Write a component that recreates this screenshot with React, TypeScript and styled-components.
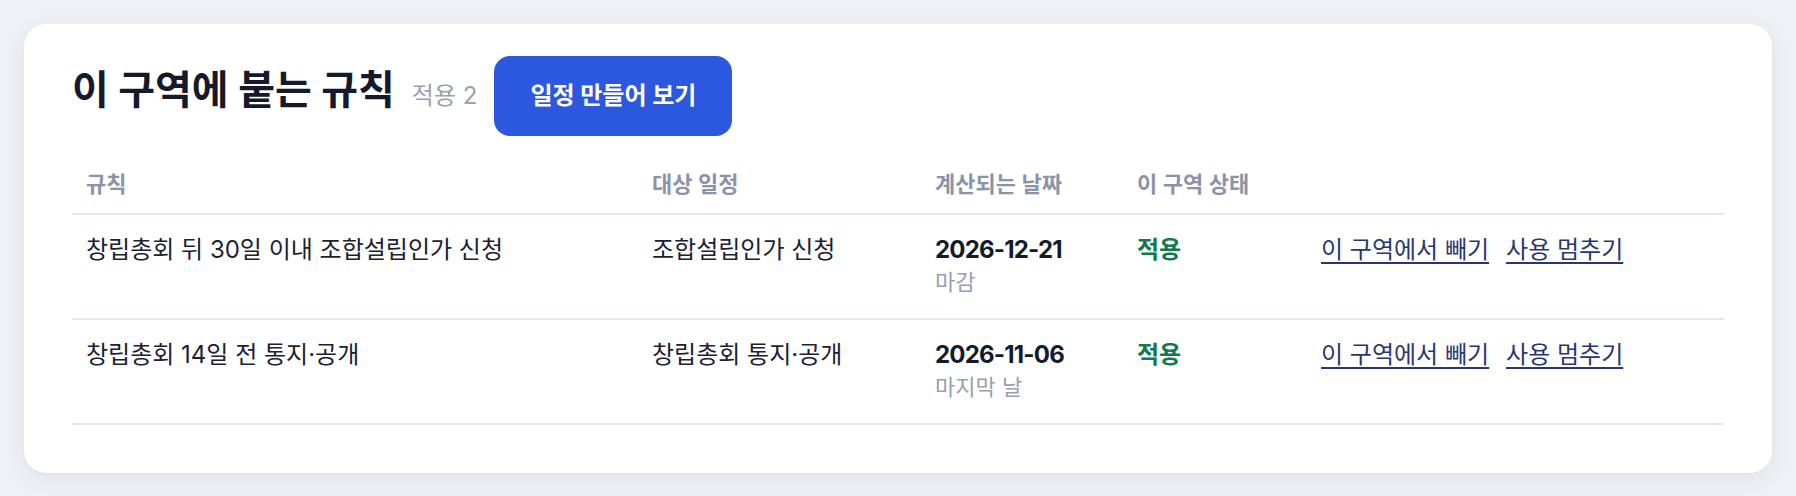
import React from "react";
import styled, { createGlobalStyle } from "styled-components";

const GlobalStyle = createGlobalStyle`
  * { box-sizing: border-box; }
  html, body { margin: 0; padding: 0; }
  body {
    background: #eef0f5;
    font-family: Inter, "Noto Sans CJK KR", "Noto Sans", sans-serif;
    color: #172033;
  }
`;

const Page = styled.div`
  padding: 24px;
`;

const Card = styled.section`
  background: #ffffff;
  border-radius: 22px;
  box-shadow: 0 6px 22px rgba(28, 38, 72, 0.06), 0 1px 3px rgba(28, 38, 72, 0.04);
  padding: 32px 48px 48px;
`;

const Header = styled.div`
  display: flex;
  align-items: baseline;
  gap: 17px;
`;

const Title = styled.h2`
  margin: 0;
  font-size: 40px;
  line-height: 48px;
  font-weight: 700;
  color: #141a2b;
`;

const Count = styled.span`
  font-size: 24px;
  line-height: 32px;
  color: #979fb1;
  font-weight: 400;
`;

const PrimaryButton = styled.button`
  font-family: inherit;
  font-size: 24px;
  line-height: 32px;
  font-weight: 700;
  color: #ffffff;
  background: #2c58e0;
  border: none;
  border-radius: 16px;
  padding: 24px 36px;
  cursor: pointer;
`;

const Table = styled.div`
  margin-top: 21px;
  display: grid;
  grid-template-columns: 566px 283px 202px 184px 1fr;
`;

const HeadCell = styled.div`
  padding: 12px 14px 13px;
  font-size: 22px;
  line-height: 31px;
  font-weight: 600;
  color: #8a93a7;
  border-bottom: 2px solid #e3e7f0;
`;

const Cell = styled.div`
  padding: 18px 14px 20px;
  font-size: 24px;
  line-height: 34px;
  color: #1a2233;
  border-bottom: 2px solid #e3e7f0;
  display: flex;
  flex-direction: column;
  align-items: flex-start;
`;

const DateMain = styled.span`
  font-weight: 700;
  color: #131a2c;
  letter-spacing: -0.8px;
`;

const DateSub = styled.span`
  font-size: 22px;
  line-height: 31px;
  color: #979fb0;
`;

const Status = styled.span`
  font-weight: 700;
  color: #0d7a4f;
`;

const Actions = styled.div`
  display: flex;
  gap: 17px;
`;

const LinkButton = styled.a`
  font-size: 24px;
  line-height: 34px;
  color: #28386f;
  text-decoration: underline;
  text-decoration-thickness: 2px;
  text-underline-offset: 4px;
  cursor: pointer;
`;

type Rule = {
  name: string;
  target: string;
  date: string;
  dateLabel: string;
  status: string;
};

const rules: Rule[] = [
  {
    name: "창립총회 뒤 30일 이내 조합설립인가 신청",
    target: "조합설립인가 신청",
    date: "2026-12-21",
    dateLabel: "마감",
    status: "적용",
  },
  {
    name: "창립총회 14일 전 통지·공개",
    target: "창립총회 통지·공개",
    date: "2026-11-06",
    dateLabel: "마지막 날",
    status: "적용",
  },
];

export default function App() {
  return (
    <>
      <GlobalStyle />
      <Page>
        <Card>
          <Header>
            <Title>이 구역에 붙는 규칙</Title>
            <Count>적용 2</Count>
            <PrimaryButton>일정 만들어 보기</PrimaryButton>
          </Header>
          <Table>
            <HeadCell>규칙</HeadCell>
            <HeadCell>대상 일정</HeadCell>
            <HeadCell>계산되는 날짜</HeadCell>
            <HeadCell>이 구역 상태</HeadCell>
            <HeadCell />
            {rules.map((r) => (
              <React.Fragment key={r.name}>
                <Cell>{r.name}</Cell>
                <Cell>{r.target}</Cell>
                <Cell>
                  <DateMain>{r.date}</DateMain>
                  <DateSub>{r.dateLabel}</DateSub>
                </Cell>
                <Cell>
                  <Status>{r.status}</Status>
                </Cell>
                <Cell>
                  <Actions>
                    <LinkButton>이 구역에서 빼기</LinkButton>
                    <LinkButton>사용 멈추기</LinkButton>
                  </Actions>
                </Cell>
              </React.Fragment>
            ))}
          </Table>
        </Card>
      </Page>
    </>
  );
}
